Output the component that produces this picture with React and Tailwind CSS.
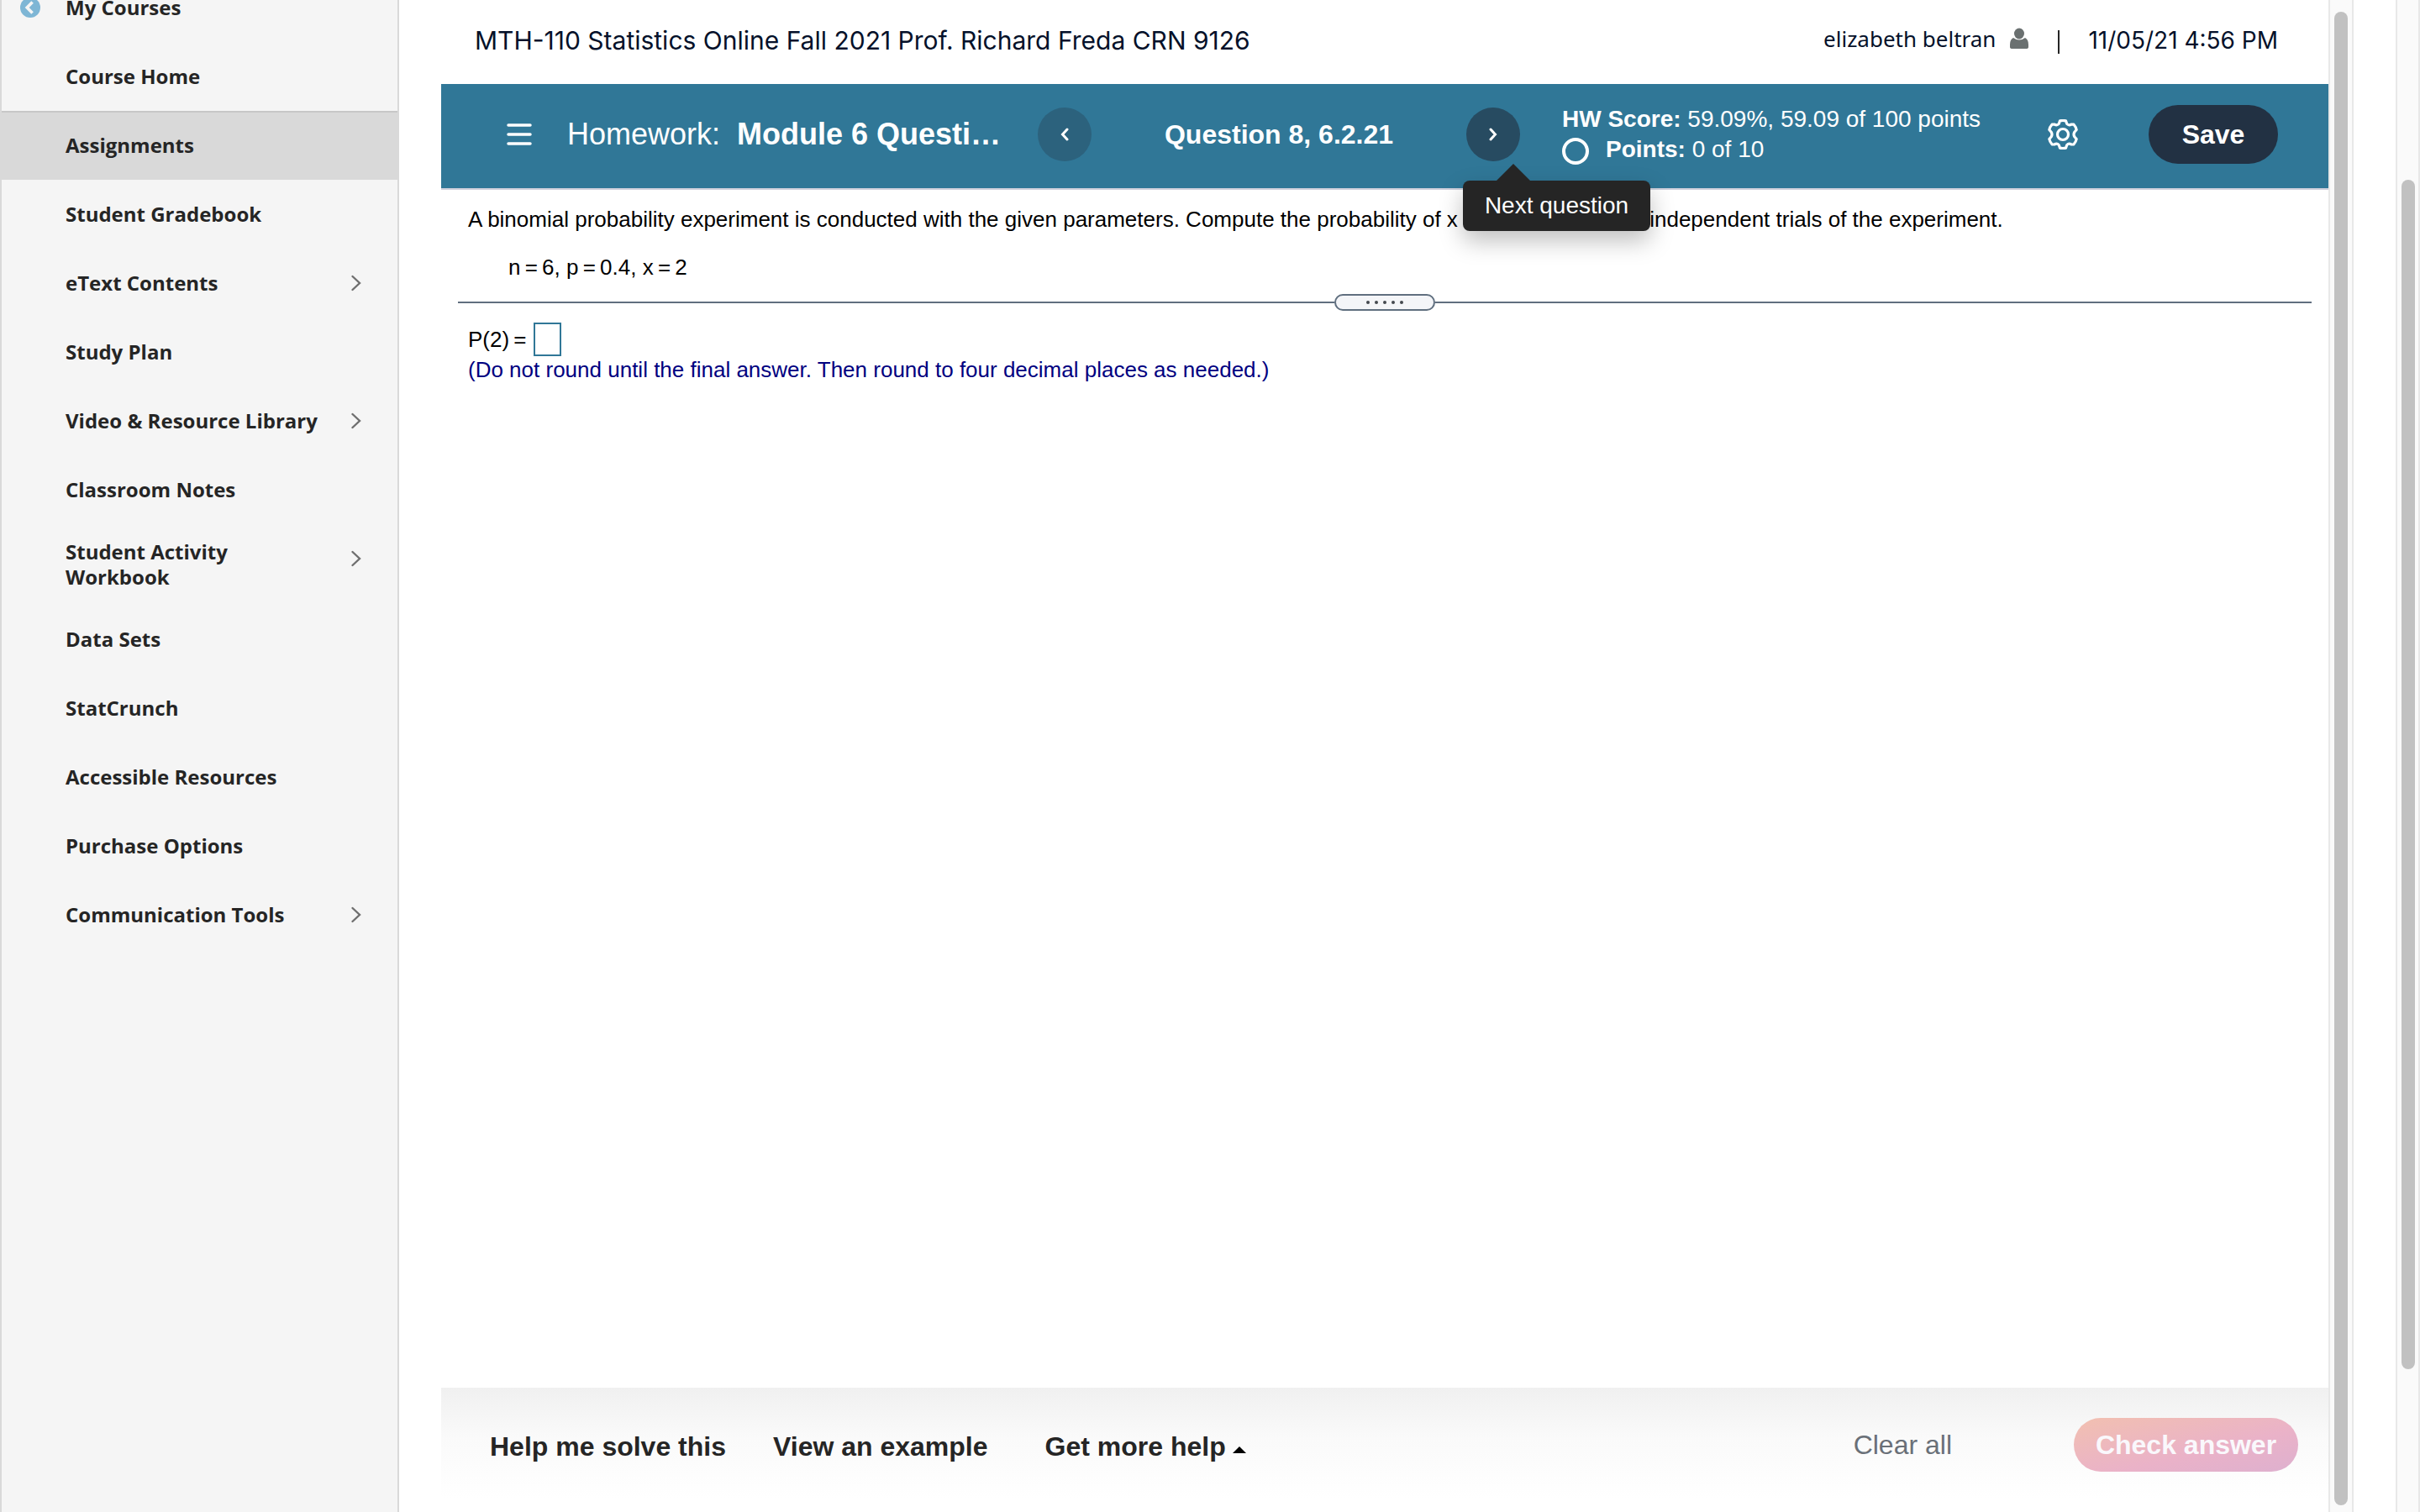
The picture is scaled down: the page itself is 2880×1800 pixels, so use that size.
const nav = [
  { label: 'My Courses', back: true },
  { label: 'Course Home' },
  { label: 'Assignments', active: true },
  { label: 'Student Gradebook' },
  { label: 'eText Contents', more: true },
  { label: 'Study Plan' },
  { label: 'Video & Resource Library', more: true },
  { label: 'Classroom Notes' },
  { label: 'Student Activity Workbook', more: true },
  { label: 'Data Sets' },
  { label: 'StatCrunch' },
  { label: 'Accessible Resources' },
  { label: 'Purchase Options' },
  { label: 'Communication Tools', more: true },
];

function Sidebar() {
  return (
    <nav aria-label="Course" className="w-[475px] shrink-0 border-x-2 border-[#d9d9d9] bg-[#f5f5f5] font-['Open_Sans',sans-serif] text-[24px] leading-[30px] font-bold text-[#252525]">
      <ul className="-mt-8">
        {nav.map((item) => (
          <li key={item.label} className={item.active ? 'border-t-2 border-[#c7c7c7] bg-[#d9d9d9]' : ''}>
            <a
              href="#"
              aria-current={item.active ? 'page' : undefined}
              className={`flex items-start ${item.active ? 'min-h-20 pt-6 pb-6' : item.label === 'Student Activity Workbook' ? 'min-h-24 pt-[18px] pb-[18px]' : 'min-h-[82px] pt-[26px] pb-[26px]'}`}
            >
              <span className="flex w-[76px] shrink-0 pl-[22px] pt-[3px]">
                {item.back && (
                  <svg className="size-6" viewBox="0 0 24 24" aria-hidden="true">
                    <circle cx="12" cy="12" r="12" fill="#7eb6d5" />
                    <path d="M14.600 5.500 8.200 12l6.400 6.500" fill="none" stroke="#f5f5f5" strokeWidth="3.6" />
                  </svg>
                )}
              </span>
              <span className="max-w-[310px] grow pr-1">
                {item.label === 'Student Activity Workbook' ? <>Student Activity<br />Workbook</> : item.label}
              </span>
              {item.more && (
                <svg className={`ml-auto mr-[42px] h-[22px] w-[14px] ${item.label === 'Student Activity Workbook' ? 'mt-3' : 'mt-1'}`} viewBox="0 0 14 22" fill="none" stroke="#6f6f6f" strokeWidth="2.4" strokeLinecap="round" aria-hidden="true">
                  <path d="M2.500 3 11 11 2.500 19" />
                </svg>
              )}
            </a>
          </li>
        ))}
      </ul>
    </nav>
  );
}

function TopBar() {
  return (
    <div className="flex h-[100px] items-center bg-white pr-[60px] pb-1 pl-10 font-['Inter',sans-serif] text-[#05112a]">
      <h1 className="text-[30px] leading-10">MTH-110 Statistics Online Fall 2021 Prof. Richard Freda CRN 9126</h1>
      <div className="ml-auto flex items-center text-[28px] leading-9">
        <a href="#" className="flex items-center gap-4 pb-1 font-['Noto_Sans',sans-serif] text-[26px]">
          elizabeth beltran
          <svg className="h-[26px] w-6" viewBox="0 0 24 26" fill="#6a7070" aria-hidden="true">
            <ellipse cx="12" cy="7" rx="6" ry="6.500" />
            <path d="M5 12q7 5 14 0 4 2 4 8v3q0 2-3 2H4q-3 0-3-2v-3q0-6 4-8z" />
          </svg>
        </a>
        <span className="mx-[34px] mt-1 h-7 w-0.5 bg-[#252525]" />
        <time>11/05/21 4:56 PM</time>
      </div>
    </div>
  );
}

function Banner() {
  return (
    <header className="flex h-[126px] items-center border-b-2 border-[#cfd0dc] bg-[#307797] pr-[60px] pb-1 pl-[78px] text-white">
      <button type="button" aria-label="Menu">
        <svg className="h-7 w-[30px]" viewBox="0 0 30 28" stroke="white" strokeWidth="3.500" strokeLinecap="round" aria-hidden="true">
          <path d="M2 3H28M2 14H28M2 25H28" />
        </svg>
      </button>
      <h2 className="ml-[42px] flex w-[520px] shrink-0 gap-5 text-[36px] leading-10 whitespace-nowrap">
        <span>Homework:</span>
        <b>Module 6 Questi…</b>
      </h2>
      <button type="button" aria-label="Previous question" className="ml-10 flex size-16 shrink-0 items-center justify-center rounded-full bg-[#2c627d]">
        <svg className="h-4 w-2.5" viewBox="0 0 10 16" fill="none" stroke="white" strokeWidth="3" strokeLinecap="round" aria-hidden="true"><path d="M8 2 2.500 8 8 14" /></svg>
      </button>
      <h3 className="flex-1 text-center text-[32px] leading-10 font-bold">Question 8, 6.2.21</h3>
      <div className="relative mr-[50px] shrink-0">
        <button type="button" aria-label="Next question" aria-describedby="next-tip" className="flex size-16 items-center justify-center rounded-full bg-[#274b61]">
          <svg className="h-4 w-2.5" viewBox="0 0 10 16" fill="none" stroke="white" strokeWidth="3" strokeLinecap="round" aria-hidden="true"><path d="M2 2 7.500 8 2 14" /></svg>
        </button>
        <div id="next-tip" role="tooltip" className="absolute top-[87px] -left-1 z-10 flex h-[60px] w-[223px] items-center justify-center rounded-lg bg-[#252525] text-[28px] whitespace-nowrap text-white shadow-[0_12px_28px_rgba(0,0,0,0.25)]">
          <svg className="absolute -top-5 left-10 h-5 w-10" viewBox="0 0 40 20" fill="#252525" aria-hidden="true"><path d="M20 0 40 20H0z" /></svg>
          Next question
        </div>
      </div>
      <div className="w-[508px] shrink-0 text-[28px] leading-9">
        <p className="whitespace-nowrap"><b>HW Score:</b> 59.09%, 59.09 of 100 points</p>
        <p className="flex items-center gap-5">
          <span className="mt-1 size-8 rounded-full border-4 border-white" />
          <span><b>Points:</b> 0 of 10</span>
        </p>
      </div>
      <button type="button" aria-label="Settings" className="mr-[84px] ml-[70px] shrink-0">
        <svg className="size-9" viewBox="0 0 36 36" fill="none" stroke="white" strokeWidth="3.2" strokeLinejoin="round" aria-hidden="true">
          <path d="M14.500 1.800Q18 1.200 21.500 1.800L22.800 5.500Q25 7.800 28.200 6L31 6.200Q33.500 9 34.200 12.500L32 15Q30 18 32 21L34.200 23.500Q33.500 27 31 29.800L28.200 30Q25 28.200 22.800 30.500L21.500 34.200Q18 34.800 14.500 34.200L13.200 30.500Q11 28.200 7.800 30L5 29.800Q2.500 27 1.800 23.500L4 21Q6 18 4 15L1.800 12.500Q2.500 9 5 6.200L7.800 6Q11 7.800 13.200 5.500z" />
          <circle cx="18" cy="18" r="6.500" />
        </svg>
      </button>
      <button type="button" className="h-[70px] w-[154px] shrink-0 rounded-full bg-[#223143] text-[32px] font-bold">Save</button>
    </header>
  );
}

function Question() {
  return (
    <section className="grow px-5 pt-[19px] text-[26px] leading-8 text-black">
      <div className="px-3">
        <p className="whitespace-nowrap">
          A binomial probability experiment is conducted with the given parameters. Compute the probability of x successes in the n independent trials of the experiment.
        </p>
        <p className="mt-[25px] pl-12">n{'\u2009'}={'\u2009'}6, p{'\u2009'}={'\u2009'}0.4, x{'\u2009'}={'\u2009'}2</p>
      </div>
      <div className="mt-1.5 flex h-10 items-center">
        <span className="h-0.5 grow bg-[#606f7f]" />
        <button type="button" aria-label="Resize panels" className="flex h-5 w-[120px] items-center justify-center gap-1.5 rounded-full border-2 border-[#606f7f] bg-[#f4f5f8]">
          {[0, 1, 2, 3, 4].map((i) => <span key={i} className="size-1 rounded-full bg-[#44484f]" />)}
        </button>
        <span className="h-0.5 grow bg-[#606f7f]" />
      </div>
      <div className="px-3 pt-1">
        <label className="flex items-center gap-2">
          <span>P(2){'\u2009'}=</span>
          <input type="text" className="h-10 w-[33px] border-2 border-[#307797] bg-white" />
        </label>
        <p className="text-[#000080]">(Do not round until the final answer. Then round to four decimal places as needed.)</p>
      </div>
    </section>
  );
}

function Footer() {
  return (
    <footer className="flex h-[148px] items-start bg-linear-to-b from-[#f0f0f0] via-[#fafafa] via-40% to-white to-90% pr-9 pl-[58px] text-[32px] leading-10 font-bold text-[#252525]">
      <button type="button" className="mt-[50px]">Help me solve this</button>
      <button type="button" className="mt-[50px] ml-14">View an example</button>
      <button type="button" className="mt-[50px] ml-[68px] flex items-center gap-2">
        Get more help
        <svg className="mt-2 h-2 w-4" viewBox="0 0 16 8" aria-hidden="true"><path d="M8 0l8 8H0z" /></svg>
      </button>
      <button type="button" className="mt-12 mr-[145px] ml-auto font-normal text-[#6a7078]">Clear all</button>
      <button type="button" className="mt-9 h-16 w-[267px] rounded-full bg-linear-to-br from-[#f2c0b0] via-[#eab2c8] via-60% to-[#deb0cf] text-[#faf8fc]">Check answer</button>
    </footer>
  );
}

export default function App() {
  return (
    <div className="flex h-screen overflow-hidden bg-white font-['Liberation_Sans',sans-serif]">
      <Sidebar />
      <main className="ml-[50px] flex min-w-0 flex-1 flex-col">
        <TopBar />
        <Banner />
        <Question />
        <Footer />
      </main>
      <div className="flex w-[30px] shrink-0 flex-col items-center border-x-2 border-[#e8e8e8] bg-[#fafafa] pt-3.5 pb-2">
        <div className="w-4 grow rounded-full bg-[#c1c1c1]" />
      </div>
      <div className="ml-[50px] flex w-[29px] shrink-0 flex-col items-center border-x-2 border-[#e8e8e8] bg-[#fafafa] pt-[214px] pb-[170px]">
        <div className="w-4 grow rounded-full bg-[#c1c1c1]" />
      </div>
    </div>
  );
}
